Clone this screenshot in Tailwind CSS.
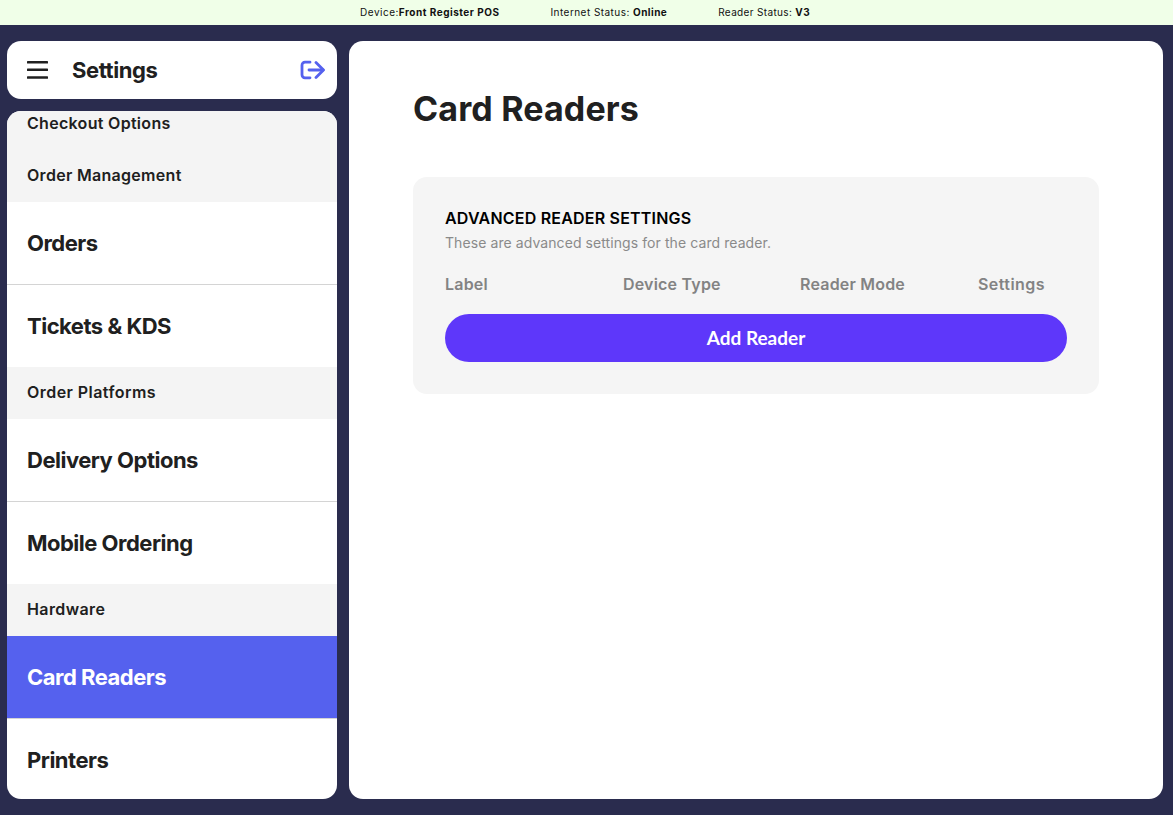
<!DOCTYPE html>
<html lang="en">
<head>
<meta charset="utf-8">
<title>Card Readers</title>
<script src="https://cdn.jsdelivr.net/npm/@tailwindcss/browser@4"></script>
</head>
<body class="h-[815px] overflow-hidden bg-[#2a2c4e] font-['Inter',sans-serif] text-[#202020]">
<div class="flex h-[25px] items-center justify-center gap-[51px] bg-[#f0ffe8] pr-[3px] text-[10px] text-[#111]">
  <div class="tracking-[0.5px]">Device:<b>Front Register POS</b></div>
  <div class="tracking-[0.45px]">Internet Status: <b>Online</b></div>
  <div class="tracking-[0.35px]">Reader Status: <b>V3</b></div>
</div>
<div class="mt-4 flex h-[758px] gap-3 pl-[7px] pr-[10px]">
  <aside class="flex w-[330px] flex-col gap-3">
    <header class="flex h-[58px] items-center rounded-[14px] bg-white pl-5 pr-3">
      <svg width="22" height="18" viewBox="0 0 22 18" fill="#202020" class="mr-[23px]"><rect y="0" width="21" height="2.6" rx="0.6"/><rect y="7.4" width="21" height="2.6" rx="0.6"/><rect y="15.200" width="21" height="2.600" rx="0.600"/></svg>
      <span class="text-[22px] font-bold tracking-[-0.4px]">Settings</span>
      <svg width="25" height="20" viewBox="0 0 25 20" fill="none" stroke="#5561ee" stroke-width="2.800" stroke-linecap="round" stroke-linejoin="round" class="ml-auto"><path d="M10 2.200H5A3 3 0 0 0 2 5.200V14.800A3 3 0 0 0 5 17.800H10"/><path d="M9 10H23"/><path d="M16 2.500L23.500 10L16 17.500"/></svg>
    </header>
    <nav class="flex h-[688px] flex-col overflow-hidden rounded-[14px] bg-white">
      <div class="flex h-[39px] shrink-0 items-start bg-[#f4f4f4] px-5 text-base font-semibold tracking-[0.3px]">Checkout Options</div>
      <div class="flex h-[52px] shrink-0 items-center bg-[#f4f4f4] px-5 pb-0.5 text-base font-semibold tracking-[0.3px]">Order Management</div>
      <div class="flex h-[83px] shrink-0 items-center border-b border-[#d4d4d4] px-5 text-[22px] font-bold tracking-[-0.5px]">Orders</div>
      <div class="flex h-[82px] shrink-0 items-center px-5 text-[22px] font-bold tracking-[-0.5px]">Tickets &amp; KDS</div>
      <div class="flex h-[52px] shrink-0 items-center bg-[#f4f4f4] px-5 pb-0.5 text-base font-semibold tracking-[0.45px]">Order Platforms</div>
      <div class="flex h-[83px] shrink-0 items-center border-b border-[#d4d4d4] px-5 text-[22px] font-bold tracking-[-0.5px]">Delivery Options</div>
      <div class="flex h-[82px] shrink-0 items-center px-5 text-[22px] font-bold tracking-[-0.5px]">Mobile Ordering</div>
      <div class="flex h-[52px] shrink-0 items-center bg-[#f4f4f4] px-5 pb-0.5 text-base font-semibold tracking-[0.4px]">Hardware</div>
      <div class="flex h-[83px] shrink-0 items-center border-b border-[#d4d4d4] bg-[#5561ee] px-5 text-[22px] font-bold tracking-[-0.5px] text-white">Card Readers</div>
      <div class="flex h-[80px] shrink-0 items-center px-5 pt-0.5 text-[22px] font-bold tracking-[-0.5px]">Printers</div>
    </nav>
  </aside>
  <main class="flex-1 rounded-[14px] bg-white pt-[45px] pl-16">
    <h1 class="text-[34px] leading-[46px] font-bold tracking-[0.15px]">Card Readers</h1>
    <section class="mt-[45px] w-[686px] rounded-[14px] bg-[#f5f5f5] px-8 pt-[32px] pb-8">
      <h2 class="text-base leading-[18px] font-semibold tracking-[0.2px] text-black">ADVANCED READER SETTINGS</h2>
      <p class="mt-[7px] text-[14px] leading-[18px] tracking-[0.08px] text-[#8a8a8a]">These are advanced settings for the card reader.</p>
      <div class="mt-[21px] grid grid-cols-[178px_177px_178px_1fr] text-base leading-[22px] font-semibold tracking-[0.2px] text-[#838383]">
        <div>Label</div><div>Device Type</div><div>Reader Mode</div><div class="tracking-[0.45px]">Settings</div>
      </div>
      <button class="mt-[19px] block h-12 w-full rounded-full bg-[#5e37fa] font-['Lato',sans-serif] text-[19px] font-bold text-white">Add Reader</button>
    </section>
  </main>
</div>
</body>
</html>
